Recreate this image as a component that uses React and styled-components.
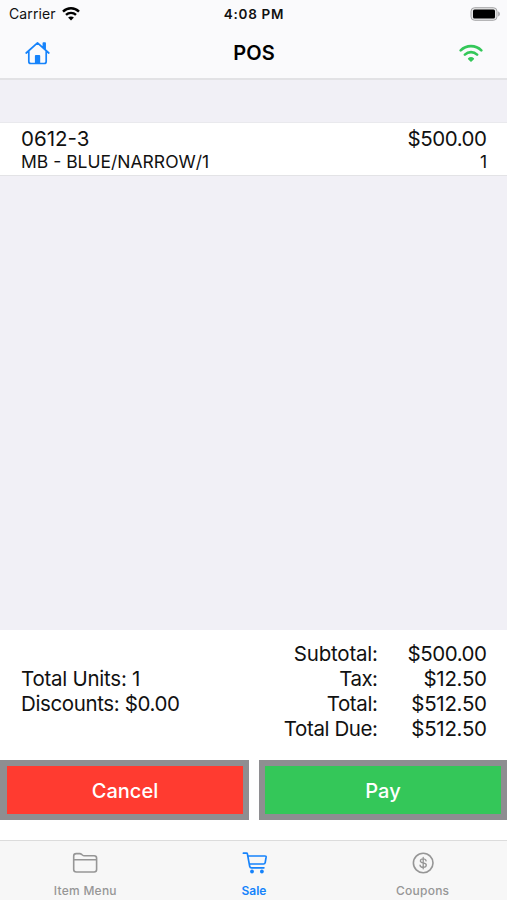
import React from "react";
import styled, { createGlobalStyle } from "styled-components";

const GlobalStyle = createGlobalStyle`
  * {
    box-sizing: border-box;
  }

  body {
    margin: 0;
    font-family: Inter, "Liberation Sans", sans-serif;
    color: #111;
  }
`;

const Screen = styled.div`
  display: flex;
  flex-direction: column;
  width: 507px;
  height: 900px;
  overflow: hidden;
  background-color: #f1f0f6;
`;

const Header = styled.header`
  height: 80px;
  background-color: #fafafc;
  border-bottom: 2px solid #e2e2e5;
`;

const StatusBar = styled.div`
  display: grid;
  grid-template-columns: 1fr auto 1fr;
  align-items: center;
  height: 27px;
  padding: 0 6px 0 9px;
  font-size: 14px;
  line-height: 26px;
`;

const Carrier = styled.div`
  display: flex;
  align-items: center;
  gap: 6px;
  letter-spacing: 0.12px;
`;

const Clock = styled.div`
  padding: 1px 2px 0 0;
  font-size: 13.5px;
  font-weight: 600;
  letter-spacing: 0.7px;
`;

const Battery = styled.div`
  display: flex;
  justify-content: flex-end;
`;

const NavBar = styled.div`
  display: grid;
  grid-template-columns: 1fr auto 1fr;
  align-items: center;
  height: 51px;
  padding: 0 24px 0 25px;
`;

const Title = styled.h1`
  margin: 0;
  font-size: 20px;
  line-height: 24px;
  font-weight: 600;
  color: #000;
`;

const NavIcon = styled.div`
  display: flex;
  justify-content: ${(props) => (props.$end ? "flex-end" : "flex-start")};
`;

const ItemList = styled.main`
  flex: 1;
  padding-top: 42px;
`;

const Item = styled.div`
  height: 54px;
  padding: 4px 20px 0 21px;
  background-color: #fff;
  border-top: 1px solid #e9e9ed;
  border-bottom: 1px solid #e3e3e6;
`;

const ItemLine = styled.div`
  display: flex;
  justify-content: space-between;
  font-size: ${(props) => (props.$small ? "17.5px" : "20.5px")};
  line-height: ${(props) => (props.$small ? "22px" : "24px")};
`;

// the margin takes back the spacing after the last letter
const Label = styled.span`
  letter-spacing: ${(props) => props.$spacing || 0}px;
  margin-right: ${(props) => -(props.$spacing || 0)}px;
`;

const Summary = styled.section`
  height: 210px;
  background-color: #fff;
`;

const Totals = styled.div`
  display: flex;
  justify-content: space-between;
  height: 130px;
  padding: 11px 20px 0 21px;
  font-size: 20.5px;
  line-height: 25px;
`;

const Counts = styled.div`
  padding-top: 25px;
`;

const Amounts = styled.div`
  display: grid;
  grid-template-columns: auto 109px;
  grid-auto-rows: 25px;
  text-align: right;
`;

const Actions = styled.div`
  display: grid;
  grid-template-columns: 249px 248px;
  gap: 10px;
`;

const ActionButton = styled.button`
  height: 60px;
  padding: 2px 0 0;
  border: 6px solid #8e8e91;
  border-left-width: ${(props) => (props.$first ? "7px" : "6px")};
  border-radius: 0;
  background-color: ${(props) => props.$color};
  color: #fff;
  font-family: inherit;
  font-size: 20px;
  font-weight: 500;
  line-height: 24px;
`;

const TabBar = styled.nav`
  display: grid;
  grid-template-columns: repeat(3, 1fr);
  height: 60px;
  padding: 0 0 0 1px;
  background-color: #f7f7f7;
  border-top: 1px solid #dcdcdc;
`;

const Tab = styled.div`
  display: flex;
  flex-direction: column;
  align-items: center;
  padding-top: 9px;
  color: ${(props) => (props.$active ? "#1683fb" : "#969696")};
  font-size: 12px;
  font-weight: ${(props) => (props.$active ? 600 : 500)};
  line-height: 16px;
  letter-spacing: ${(props) => (props.$active ? 0 : 0.25)}px;

  svg {
    margin-bottom: 7px;
  }
`;

const WifiIcon = ({ width, height, color }) => (
  <svg width={width} height={height} viewBox="0 0 24 18" fill="none">
    <path
      d="M1.7 6.4C7.3.7 16.7.7 22.3 6.4M5.9 10.6c3.5-3.3 8.7-3.3 12.2 0"
      stroke={color}
      strokeWidth="2.6"
      strokeLinecap="round"
    />
    <path
      d="M9.1 14.2c1.5-1.5 4.3-1.5 5.8 0 .4.4.3.7 0 1l-2.3 2.3c-.4.4-.8.4-1.2 0l-2.3-2.3c-.3-.3-.4-.6 0-1Z"
      fill={color}
    />
  </svg>
);

const StatusWifiIcon = () => (
  <svg width="18" height="14" viewBox="0 0 18 14" fill="none">
    <path
      d="M1 4.6c4.5-4.4 11.5-4.4 16 0M4 7.9c2.8-2.7 7.2-2.7 10 0"
      stroke="#000"
      strokeWidth="2.4"
    />
    <path d="M6.1 10.5c1.6-1.5 4.2-1.5 5.8 0L9 13.5Z" fill="#000" />
  </svg>
);

const BatteryIcon = () => (
  <svg width="31" height="14" viewBox="0 0 31 14" fill="none">
    <rect x="1" y=".7" width="26" height="12.6" rx="3.6" fill="#e5e5e6" stroke="#a5a5a7" />
    <rect x="3" y="2.4" width="22" height="9.2" rx="1.5" fill="#000" />
    <path d="M28.2 4.6c2.2.5 2.2 4.3 0 4.8Z" fill="#a5a5a7" />
  </svg>
);

const HomeIcon = () => (
  <svg width="25" height="24" viewBox="0 0 25 24" fill="none">
    <path
      d="M1.2 12 12.5 1.8 23.8 12M3.8 10v10.5c0 1.3.7 2 2 2h13.4c1.3 0 2-.7 2-2V10M18.4 6.8V2.2h1.7v6.2"
      stroke="#1683fb"
      strokeWidth="1.7"
      strokeLinecap="round"
      strokeLinejoin="round"
    />
    <path d="M9.9 22.5V15c0-.6.3-.9.9-.9h3.5c.6 0 .9.3.9.9v7.5Z" fill="#1683fb" />
  </svg>
);

const FolderIcon = () => (
  <svg width="26" height="26" viewBox="-.5 0 26 26" fill="none" stroke="currentColor" strokeWidth="1.6">
    <path d="M1.2 19.5V6.1c0-1.6.9-2.5 2.5-2.5h3.5c.8 0 1.3.2 1.9.7l.8.7c.6.5 1 .7 1.8.7h9.9c1.6 0 2.5.9 2.5 2.5v11.3c0 1.6-.9 2.5-2.5 2.5H3.9c-1.8 0-2.7-.9-2.7-2.5ZM1.2 9.7h22.9" />
  </svg>
);

const CartIcon = () => (
  <svg width="26" height="26" viewBox="-1.2 0 26 26" fill="none">
    <path
      d="M1.2 3.2h3.1c.5 0 .8.2.9.7l2.3 12.4c.2 1 .8 1.5 1.8 1.5h12.4M5.7 6h17.1c.9 0 1.2.4 1.1 1.2l-.9 5.4c-.2 1-.7 1.4-1.7 1.4H7.2"
      stroke="currentColor"
      strokeWidth="1.7"
      strokeLinecap="round"
      strokeLinejoin="round"
    />
    <circle cx="9.8" cy="21.5" r="1.9" fill="currentColor" />
    <circle cx="19.7" cy="21.5" r="1.9" fill="currentColor" />
  </svg>
);

const DollarIcon = () => (
  <svg width="26" height="26" viewBox="0 0 26 26" fill="none" stroke="currentColor">
    <circle cx="13.2" cy="13" r="9.8" strokeWidth="1.6" />
    <path
      d="M16.1 10.9c-.2-1.3-1.3-2-2.9-2s-2.8.8-2.8 2 1 1.6 2.8 2c2 .4 3.1.9 3.1 2.2s-1.1 2.2-3.1 2.2-3.1-.9-3.2-2.2M13.2 7.4v11.4"
      strokeWidth="1.3"
      strokeLinecap="round"
    />
  </svg>
);

const amounts = [
  { label: "Subtotal:", value: "$500.00", labelSpacing: -0.2, valueSpacing: -0.45 },
  { label: "Tax:", value: "$12.50", labelSpacing: -0.5, valueSpacing: -0.3 },
  { label: "Total:", value: "$512.50", labelSpacing: -0.35, valueSpacing: -0.3 },
  { label: "Total Due:", value: "$512.50", labelSpacing: -0.4, valueSpacing: -0.3 },
];

export default () => (
  <Screen>
    <GlobalStyle />
    <Header>
      <StatusBar>
        <Carrier>
          Carrier
          <StatusWifiIcon />
        </Carrier>
        <Clock>4:08 PM</Clock>
        <Battery>
          <BatteryIcon />
        </Battery>
      </StatusBar>
      <NavBar>
        <NavIcon>
          <HomeIcon />
        </NavIcon>
        <Title>POS</Title>
        <NavIcon $end>
          <WifiIcon width={24} height={18} color="#34c759" />
        </NavIcon>
      </NavBar>
    </Header>
    <ItemList>
      <Item>
        <ItemLine>
          <Label>0612-3</Label>
          <Label $spacing={-0.45}>$500.00</Label>
        </ItemLine>
        <ItemLine $small>
          <Label>MB - BLUE/NARROW/1</Label>
          <Label>1</Label>
        </ItemLine>
      </Item>
    </ItemList>
    <Summary>
      <Totals>
        <Counts>
          <div>
            <Label $spacing={-0.25}>Total Units: 1</Label>
          </div>
          <div>
            <Label $spacing={-0.38}>Discounts: $0.00</Label>
          </div>
        </Counts>
        <Amounts>
          {amounts.map(({ label, value, labelSpacing, valueSpacing }) => (
            <React.Fragment key={label}>
              <Label $spacing={labelSpacing}>{label}</Label>
              <Label $spacing={valueSpacing}>{value}</Label>
            </React.Fragment>
          ))}
        </Amounts>
      </Totals>
      <Actions>
        <ActionButton $first $color="#ff3b30">
          Cancel
        </ActionButton>
        <ActionButton $color="#34c759">Pay</ActionButton>
      </Actions>
    </Summary>
    <TabBar>
      <Tab>
        <FolderIcon />
        Item Menu
      </Tab>
      <Tab $active>
        <CartIcon />
        Sale
      </Tab>
      <Tab>
        <DollarIcon />
        Coupons
      </Tab>
    </TabBar>
  </Screen>
);
